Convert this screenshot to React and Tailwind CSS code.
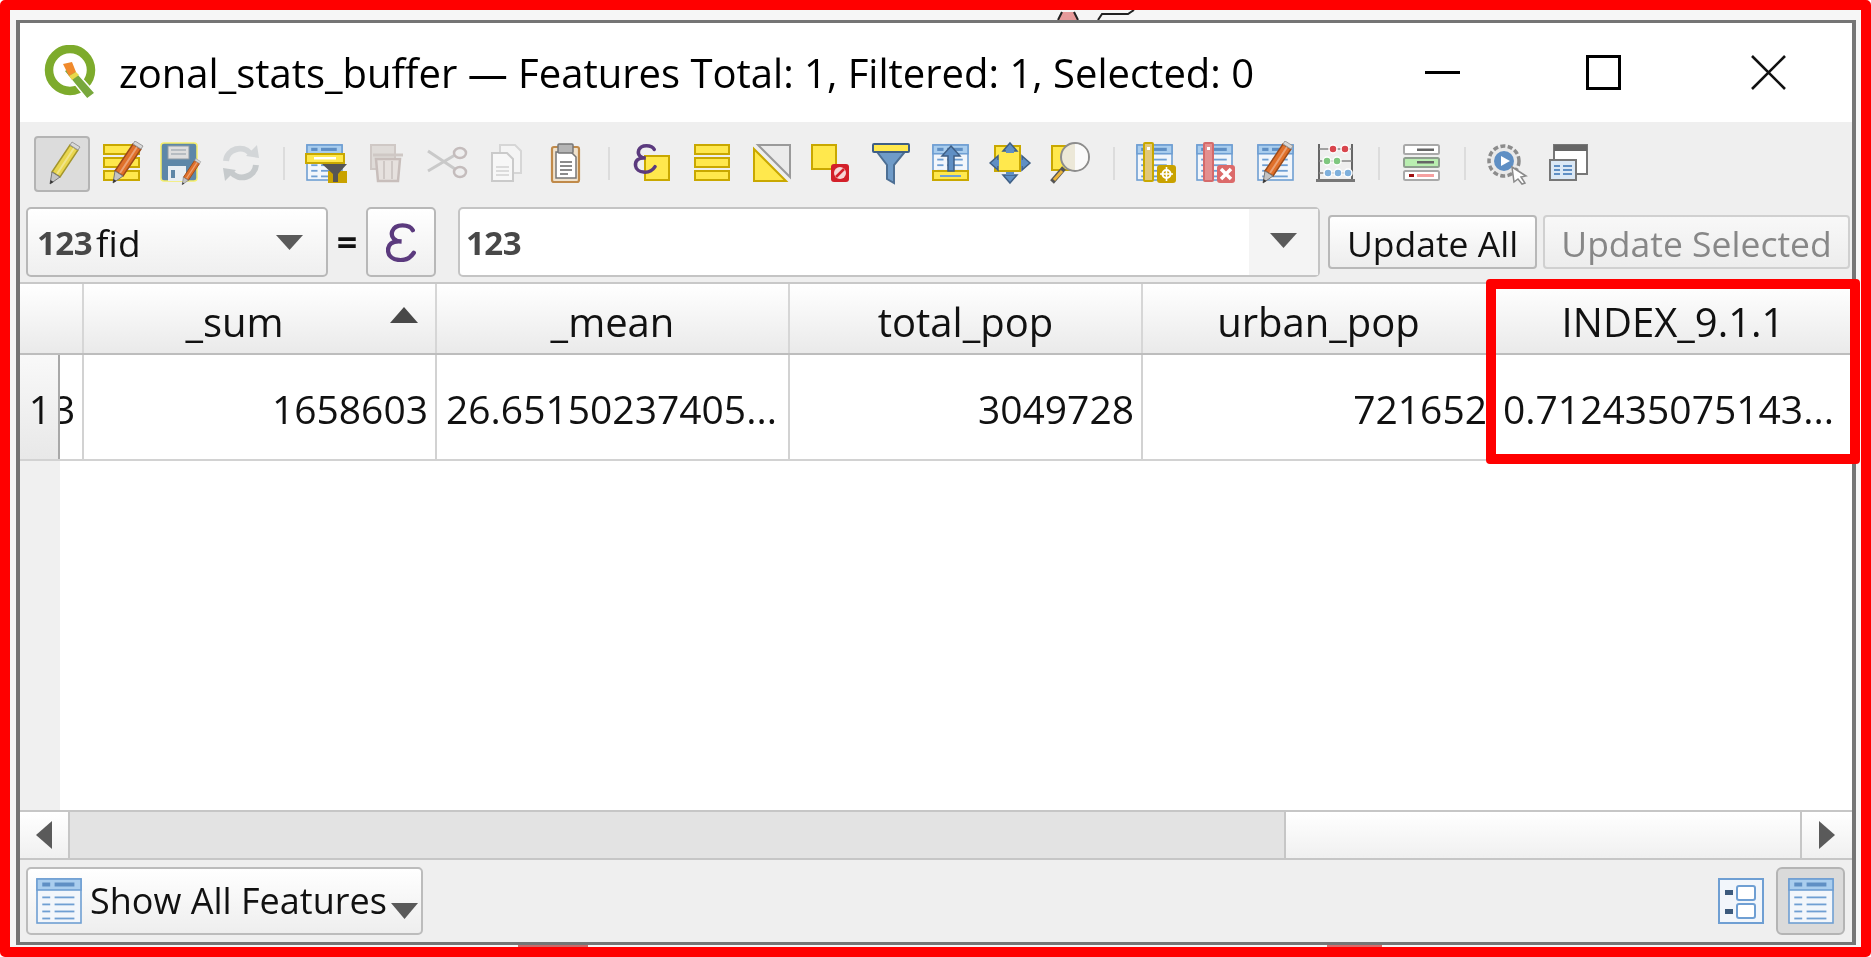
const Icon = ({ children, className = "w-11 h-11" }) => (
  <svg viewBox="0 0 44 44" className={className} fill="none">
    {children}
  </svg>
);

const Pencil = ({ body = "#e9d64f", edge = "#a4962c" }) => (
  <g>
    <path d="M12 31 L30 4 L38 9 L20 36 Z" fill={body} stroke={edge} strokeWidth="1.5" />
    <path d="M17 33 L34 7" stroke="#fff" strokeOpacity="0.35" strokeWidth="2" />
    <path d="M30 4 L32 1 L40 6 L38 9 Z" fill="#d8d8d8" stroke="#999" />
    <path d="M12 31 L20 36 L10 43 Z" fill="#c4c4c4" stroke="#777" />
    <path d="M10.5 39 L10 43 L13.5 41 Z" fill="#333" />
  </g>
);

const Epsilon = ({ color = "#5b3a7e", width = 4.2 }) => (
  <path
    d="M26 7 C23 1 9 0 6 8 C4 14 9 18 15 18 C6 17 1 21 2 28 C3 37 20 40 27 29"
    stroke={color}
    strokeWidth={width}
    strokeLinecap="round"
    fill="none"
  />
);

// blue table used by several toolbar and footer icons
const Table = ({ x = 4, y = 4, w = 35, h = 35 }) => {
  const rows = [0.42, 0.58, 0.74, 0.9];
  return (
    <g>
      <rect x={x} y={y} width={w} height={h} fill="#f2f6fb" stroke="#6f9fd3" strokeWidth="1.6" />
      <rect x={x} y={y} width={w} height={h * 0.25} fill="#a9cdee" stroke="#6f9fd3" strokeWidth="1.6" />
      <rect x={x + w * 0.12} y={y + h * 0.08} width={w * 0.18} height={h * 0.09} fill="#5f8fc4" />
      <rect x={x + w * 0.4} y={y + h * 0.08} width={w * 0.45} height={h * 0.09} fill="#5f8fc4" />
      {rows.map((r) => (
        <g key={r}>
          <rect x={x + w * 0.12} y={y + h * r - 1} width={w * 0.18} height="1.8" fill="#6f9fd3" />
          <rect x={x + w * 0.4} y={y + h * r - 1} width={w * 0.45} height="1.8" fill="#6f9fd3" />
        </g>
      ))}
    </g>
  );
};

const Yellow = (props) => <rect fill="#ffe84d" stroke="#c9a800" strokeWidth="2" {...props} />;

const PencilButton = () => (
  <Icon>
    <Pencil />
  </Icon>
);

const EditTable = () => (
  <Icon>
    <Yellow x="4" y="4" width="35" height="9" />
    <Yellow x="4" y="17" width="35" height="9" />
    <Yellow x="4" y="30" width="35" height="9" />
    <g transform="translate(3 -1)">
      <Pencil body="#e0702a" edge="#9c4a18" />
    </g>
  </Icon>
);

const Save = () => (
  <Icon>
    <rect x="2" y="2" width="36" height="38" rx="3" fill="#5d87a8" stroke="#f5ee6a" strokeWidth="1.5" />
    <rect x="9" y="5" width="21" height="13" fill="#dedede" stroke="#8f9ba5" />
    <path d="M12 9 H27 M12 13 H27" stroke="#8f9ba5" />
    <rect x="9" y="25" width="18" height="15" fill="#e8eef3" />
    <rect x="12" y="29" width="4" height="8" fill="#5d87a8" />
    <g transform="translate(17 17) scale(0.62)">
      <Pencil body="#e0702a" edge="#9c4a18" />
    </g>
  </Icon>
);

const Refresh = () => (
  <Icon>
    <path d="M7 20 C8 8 24 3 32 13" stroke="#d3d6d8" strokeWidth="6" />
    <path d="M27 15 L40 17 L38 4 Z" fill="#d3d6d8" />
    <path d="M37 24 C36 36 20 41 12 31" stroke="#c6cacc" strokeWidth="6" />
    <path d="M17 29 L4 27 L6 40 Z" fill="#c6cacc" />
  </Icon>
);

const FilterTable = () => (
  <Icon>
    <Table x={2} y={4} w={35} h={35} />
    <Yellow x="1" y="13" width="38" height="9" />
    <rect x="9" y="16" width="22" height="2.5" fill="#fff" />
    <rect x="23" y="30" width="19" height="12" fill="#c9a200" />
    <path d="M17 23 H42 L33 33 V41 H28 V33 Z" fill="#555" />
  </Icon>
);

const Trash = () => (
  <Icon>
    <rect x="6" y="4" width="24" height="24" fill="#dfdbd8" stroke="#cfc8c5" strokeWidth="2" />
    <path d="M8 14 H38" stroke="#cfc8c5" strokeWidth="3" />
    <path d="M11 18 H35 L33 40 H13 Z" fill="#e6e1de" stroke="#c8bebb" strokeWidth="2.5" />
    <path d="M19 20 V38 M27 20 V38" stroke="#cfc8c5" strokeWidth="2" />
  </Icon>
);

const Scissors = () => (
  <Icon>
    <path d="M3 10 L30 28 M3 30 L30 14" stroke="#c9c9c9" strokeWidth="3" />
    <ellipse cx="35" cy="12" rx="6" ry="5" stroke="#c4bcbc" strokeWidth="2.5" />
    <ellipse cx="35" cy="31" rx="6" ry="5" stroke="#c4bcbc" strokeWidth="2.5" />
  </Icon>
);

const Copy = () => (
  <Icon>
    <path d="M16 4 H31 L37 10 V32 H16 Z" fill="#f4f4f4" stroke="#d6d6d6" strokeWidth="2" />
    <path d="M8 12 H23 L29 18 V40 H8 Z" fill="#f7f7f7" stroke="#cacaca" strokeWidth="2" />
    <path d="M12 26 H25 M12 30 H25 M12 34 H25" stroke="#d2d2d2" strokeWidth="1.6" />
  </Icon>
);

const Paste = () => (
  <Icon>
    <rect x="8" y="6" width="27" height="35" rx="2" fill="#f0e2cc" stroke="#c08a4a" strokeWidth="2.2" />
    <path d="M12 11 H27 L32 16 V37 H12 Z" fill="#fff" stroke="#777" strokeWidth="1.5" />
    <rect x="14" y="3" width="15" height="9" rx="1" fill="#b5b5b5" stroke="#777" strokeWidth="1.5" />
    <path d="M16 21 H28 M16 25 H28 M16 29 H28 M16 33 H24" stroke="#666" strokeWidth="1.5" />
  </Icon>
);

const ExprSelect = () => (
  <Icon>
    <Yellow x="15" y="15" width="24" height="24" />
    <g transform="translate(4 3) scale(0.78)">
      <Epsilon width="4.5" />
    </g>
  </Icon>
);

const Rows = () => (
  <Icon>
    <Yellow x="5" y="4" width="34" height="9" />
    <Yellow x="5" y="17" width="34" height="9" />
    <Yellow x="5" y="30" width="34" height="9" />
  </Icon>
);

const Invert = () => (
  <Icon>
    <path d="M8 4 H40 V36 Z" fill="#ebebeb" stroke="#9a9a9a" strokeWidth="2" />
    <path d="M4 8 L36 40 H4 Z" fill="#ffe84d" stroke="#c9a800" strokeWidth="2" />
  </Icon>
);

const Deselect = () => (
  <Icon>
    <Yellow x="3" y="4" width="24" height="24" />
    <rect x="22" y="23" width="18" height="18" rx="3" fill="#d3202a" />
    <circle cx="31" cy="32" r="6" fill="#f7d6d6" />
    <path d="M27 36 L35 28" stroke="#d3202a" strokeWidth="2.5" />
  </Icon>
);

const Funnel = () => (
  <Icon>
    <path d="M5 7 L18 24 V38 L25 42 V24 L39 7 Z" fill="#6f9bc8" stroke="#4d6f94" strokeWidth="2" />
    <rect x="4" y="3" width="36" height="8" rx="1" fill="#ffe84d" stroke="#3f5f85" strokeWidth="2" />
  </Icon>
);

const MoveTop = () => (
  <Icon>
    <Table x={4} y={4} w={35} h={35} />
    <Yellow x="4" y="30" width="35" height="9" />
    <rect x="11" y="34" width="21" height="2" fill="#6f9fd3" />
    <path d="M22 5 L31 15 H25 V30 H19 V15 H13 Z" fill="#5f8fc4" stroke="#3f5f85" strokeWidth="1.5" />
  </Icon>
);

const Pan = () => (
  <Icon>
    <Yellow x="6" y="5" width="25" height="25" />
    <g fill="#5f8fc4" stroke="#3f5f85" strokeWidth="1.5">
      <path d="M21 2 L28 10 H14 Z" />
      <path d="M21 42 L28 34 H14 Z" />
      <path d="M1 22 L9 15 V29 Z" />
      <path d="M41 22 L33 15 V29 Z" />
    </g>
    <rect x="17" y="9" width="8" height="3" fill="#5f8fc4" />
    <rect x="17" y="31" width="8" height="3" fill="#5f8fc4" />
    <rect x="6" y="19" width="4" height="6" fill="#5f8fc4" />
    <rect x="32" y="19" width="4" height="6" fill="#5f8fc4" />
  </Icon>
);

const ZoomSel = () => (
  <Icon>
    <Yellow x="3" y="5" width="24" height="24" />
    <circle cx="26" cy="16" r="14" fill="#ece8d8" stroke="#8d8d8d" strokeWidth="2" />
    <path d="M26 3 A13 13 0 0 1 26 29 Z" fill="#fafafa" />
    <path d="M15 27 L3 41" stroke="#555" strokeWidth="5" />
    <path d="M13 30 L5 39" stroke="#eab33a" strokeWidth="3" />
  </Icon>
);

const NewField = () => (
  <Icon>
    <Table x={3} y={4} w={35} h={35} />
    <rect x="10" y="2" width="9" height="38" rx="1" fill="#e2c878" stroke="#c9a800" strokeWidth="2" />
    <rect x="13" y="6" width="3" height="3" fill="#fff" />
    <rect x="23" y="24" width="19" height="18" rx="3" fill="#c9a200" />
    <circle cx="32.5" cy="33" r="4" stroke="#fff" strokeWidth="2" />
    <path d="M32.5 26 V40 M26 33 H39" stroke="#fff" strokeWidth="1.6" />
  </Icon>
);

const DeleteField = () => (
  <Icon>
    <Table x={3} y={4} w={35} h={35} />
    <rect x="10" y="2" width="9" height="38" rx="1" fill="#e48f8f" stroke="#d56a6a" strokeWidth="2" />
    <rect x="13" y="6" width="3" height="3" fill="#fff" />
    <rect x="23" y="24" width="18" height="18" rx="3" fill="#dc6a6a" />
    <path d="M27 28 L37 38 M37 28 L27 38" stroke="#fff" strokeWidth="3.5" />
  </Icon>
);

const EditField = () => (
  <Icon>
    <Table x={4} y={4} w={35} h={35} />
    <g transform="translate(-1 -1)">
      <Pencil body="#e0702a" edge="#9c4a18" />
    </g>
  </Icon>
);

const Abacus = () => {
  const beads = [
    ["#d8454d", [19, 31], 8],
    ["#7fc77f", [13, 23], 20],
    ["#7fb0dc", [14, 24, 34], 32],
  ];
  return (
    <Icon>
      <path d="M5 3 V39 M38 3 V39" stroke="#666" strokeWidth="2" />
      <path d="M5 8 H38 M5 20 H38 M5 32 H38" stroke="#888" strokeWidth="1.5" />
      <rect x="2" y="38" width="39" height="3" fill="#777" />
      {beads.map(([color, xs, y]) =>
        xs.map((x) => <circle key={`${y}-${x}`} cx={x} cy={y} r="4" fill={color} stroke="#fff" strokeWidth="1.5" />)
      )}
    </Icon>
  );
};

const Conditional = () => (
  <Icon>
    <rect x="4" y="4" width="35" height="9" rx="1.5" fill="#fff" stroke="#a9a9a9" strokeWidth="2" />
    <rect x="17" y="7.5" width="17" height="2.5" fill="#666" />
    <rect x="4" y="17" width="35" height="9" rx="1.5" fill="#b9eeb0" stroke="#8f9f8f" strokeWidth="2" />
    <rect x="17" y="20" width="17" height="2.5" fill="#666" />
    <rect x="4" y="30" width="35" height="9" rx="1.5" fill="#fff" stroke="#a9a9a9" strokeWidth="2" />
    <rect x="9" y="33" width="5" height="3" fill="#a01010" />
    <rect x="17" y="33" width="17" height="3" fill="#f6a0a0" />
  </Icon>
);

const Actions = () => (
  <Icon>
    <circle cx="19" cy="20" r="15" fill="#e9e9e9" stroke="#8c8c8c" strokeWidth="3.5" strokeDasharray="5 2.4" />
    <circle cx="19" cy="20" r="10" fill="#5f8fc4" />
    <path d="M16 15 L25 20 L16 25 Z" fill="#fff" />
    <path d="M27 26 L41 35 L36 36 L40 42 L37 43 L33 38 L29 41 Z" fill="#fff" stroke="#8a8a8a" strokeWidth="1.5" />
  </Icon>
);

const Dock = () => (
  <Icon>
    <rect x="9" y="4" width="33" height="29" fill="#fff" stroke="#777" strokeWidth="2" />
    <rect x="9" y="4" width="33" height="6" fill="#666" />
    <rect x="5" y="19" width="26" height="20" fill="#dbe8f5" stroke="#777" strokeWidth="2" />
    <path d="M9 25 H15 M18 25 H27 M9 29 H15 M18 29 H27 M9 33 H15 M18 33 H27" stroke="#5f8fc4" strokeWidth="2" />
  </Icon>
);

const FormView = () => (
  <svg viewBox="0 0 46 46" className="w-[46px] h-[46px]" fill="none">
    <rect x="1" y="1" width="44" height="44" fill="#f2f6fb" stroke="#6f9fd3" strokeWidth="2" />
    <rect x="7" y="12" width="8" height="5" fill="#3c5a7d" />
    <rect x="7" y="31" width="8" height="5" fill="#3c5a7d" />
    <rect x="19" y="8" width="18" height="14" rx="2" fill="#fff" stroke="#6f9fd3" strokeWidth="2" />
    <rect x="19" y="26" width="18" height="14" rx="2" fill="#fff" stroke="#6f9fd3" strokeWidth="2" />
  </svg>
);

const TableView = () => (
  <svg viewBox="0 0 46 46" className="w-[46px] h-[46px]" fill="none">
    <Table x={1} y={1} w={44} h={44} />
  </svg>
);

const Slot = ({ children }) => (
  <div className="w-[59.8px] h-[56px] shrink-0 flex items-center justify-center">{children}</div>
);

const Sep = () => (
  <div className="w-[26px] h-[56px] shrink-0 flex items-center justify-center">
    <div className="w-[2px] h-[33px] bg-[#dcdcdc]" />
  </div>
);

const Arrow = ({ className }) => (
  <svg viewBox="0 0 10 10" preserveAspectRatio="none" className={className}>
    <path d="M0 0 H10 L5 10 Z" fill="#5a5a5a" />
  </svg>
);

const TypeBadge = () => <span className="font-bold text-[33px] leading-none text-[#484848] tracking-[-0.5px]">123</span>;

const Head = ({ children, className = "" }) => (
  <div className={`relative flex items-center justify-center pt-[6px] border-r-2 border-[#d6d6d6] ${className}`}>
    {children}
  </div>
);

const Cell = ({ children, className = "" }) => (
  <div className={`flex items-center overflow-hidden whitespace-nowrap pt-[3px] border-r-2 border-[#d2d2d2] ${className}`}>
    {children}
  </div>
);

const tools = [
  [PencilButton, EditTable, Save, Refresh],
  [FilterTable, Trash, Scissors, Copy, Paste],
  [ExprSelect, Rows, Invert, Deselect, Funnel, MoveTop, Pan, ZoomSel],
  [NewField, DeleteField, EditField, Abacus],
  [Conditional],
  [Actions, Dock],
];

export default function App() {
  return (
    <div className="relative box-border w-[1871px] h-[957px] overflow-hidden border-[10px] border-[#ff0000] rounded-[5px] bg-[#f6f6f6] pl-[6px] pt-[10px] pr-[5px] pb-[2px] font-['Open_Sans',sans-serif] text-[#111]">
      {/* bits of the map showing behind the window */}
      <svg viewBox="0 0 90 10" className="absolute left-[1040px] top-0 w-[90px] h-[10px]" fill="none">
        <path d="M8 10 L12 2 H24 L28 10 Z" fill="#e79a9a" />
        <path d="M8 10 L12 2 M28 10 L24 2 M48 10 L52 4 H78 L84 0" stroke="#222" strokeWidth="2" />
      </svg>
      <div className="absolute left-[508px] top-[935px] w-[70px] h-[2px] bg-[#c96a6a]" />
      <div className="absolute left-[1317px] top-[935px] w-[55px] h-[2px] bg-[#d96a6a]" />

      <div className="box-border h-full flex flex-col border-x-4 border-y-[3px] border-[#757575] bg-white blur-[0.5px]">
        {/* title bar */}
        <div className="h-[99px] shrink-0 flex items-center bg-white">
          <svg viewBox="0 0 54 54" className="ml-[23px] mt-[-2px] w-[54px] h-[54px]" fill="none">
            <circle cx="27" cy="25" r="21" stroke="#7dab2c" strokeWidth="8.5" />
            <path d="M21 26 L28 21 L52 48 L44 54 Z" fill="#78a83c" stroke="#fff" strokeWidth="1.5" />
            <path d="M20 19 L29 17 L33 27 L26 31 Z" fill="#f08a2c" />
            <path d="M26 31 L33 27 L36 30 L29 35 Z" fill="#e8d84a" />
          </svg>
          <span className="ml-[22px] text-[40px] leading-none whitespace-nowrap text-black">
            zonal_stats_buffer — Features Total: 1, Filtered: 1, Selected: 0
          </span>
          <div className="ml-auto flex items-center">
            <div className="w-[35px] h-[3px] bg-black mr-[126px]" />
            <div className="w-[35px] h-[35px] border-[3px] border-black mr-[130px]" />
            <svg viewBox="0 0 35 35" className="w-[35px] h-[35px] mr-[66px]">
              <path d="M1 1 L34 34 M34 1 L1 34" stroke="#111" strokeWidth="2.6" />
            </svg>
          </div>
        </div>

        {/* toolbar and field bar */}
        <div className="h-[162px] shrink-0 bg-[#efefef] border-b-2 border-[#c8c8c8]">
          <div className="relative flex items-center pl-[12px] pt-[13px]">
            <div className="absolute left-[14px] top-[14px] w-[56px] h-[56px] rounded-[4px] bg-[#dcdcdc] border-2 border-[#b4b4b4]" />
            {tools.map((group, i) => (
              <div key={i} className="relative flex items-center">
                {i > 0 && <Sep />}
                {group.map((Tool, j) => (
                  <Slot key={j}>
                    <Tool />
                  </Slot>
                ))}
              </div>
            ))}
          </div>
          <div className="h-[70px] mt-[16px] flex items-center pl-[6px]">
            <div className="box-border w-[302px] h-[70px] flex items-center pl-[9px] rounded-[5px] border-2 border-[#b8b8b8] bg-gradient-to-b from-white to-[#efefef]">
              <TypeBadge />
              <span className="ml-[4px] text-[37px] leading-none">fid</span>
              <Arrow className="ml-auto mr-[23px] w-[27px] h-[15px]" />
            </div>
            <span className="w-[38px] text-center font-bold text-[36px] leading-none">=</span>
            <div className="box-border w-[70px] h-[70px] flex items-center justify-center rounded-[5px] border-2 border-[#b8b8b8] bg-gradient-to-b from-white to-[#efefef]">
              <svg viewBox="0 0 30 38" className="w-[31px] h-[39px]">
                <Epsilon />
              </svg>
            </div>
            <div className="box-border ml-[22px] w-[862px] h-[70px] flex items-center pl-[6px] rounded-[5px] border-2 border-[#c4c4c4] bg-white">
              <TypeBadge />
              <div className="ml-auto w-[69px] h-full flex items-center justify-center bg-[#f4f4f4]">
                <Arrow className="w-[27px] h-[15px] mt-[-4px]" />
              </div>
            </div>
            <div className="box-border ml-[8px] w-[209px] h-[54px] flex items-center justify-center pt-[3px] rounded-[4px] border-2 border-[#b8b8b8] bg-gradient-to-b from-white to-[#ededed] text-[35.5px] leading-none">
              Update All
            </div>
            <div className="box-border ml-[6px] w-[307px] h-[54px] flex items-center justify-center pt-[3px] rounded-[4px] border-2 border-[#d0d0d0] bg-gradient-to-b from-[#f8f8f8] to-[#ededed] text-[35.5px] leading-none whitespace-nowrap text-[#878787]">
              Update Selected
            </div>
          </div>
        </div>

        {/* attribute table */}
        <div className="h-[71px] shrink-0 grid grid-cols-[64px_353px_353px_353px_353px_1fr] bg-gradient-to-b from-white to-[#eaeaea] border-b-2 border-[#bdbdbd] text-[40px] leading-none">
          <Head />
          <Head>
            <span className="pr-[50px]">_sum</span>
            <svg viewBox="0 0 28 16" className="absolute right-[17px] top-[23px] w-[28px] h-[16px]">
              <path d="M14 0 L28 16 H0 Z" fill="#484848" />
            </svg>
          </Head>
          <Head>_mean</Head>
          <Head>total_pop</Head>
          <Head>urban_pop</Head>
          <Head className="border-r-0">INDEX_9.1.1</Head>
        </div>
        <div className="h-[106px] shrink-0 grid grid-cols-[40px_24px_353px_353px_353px_353px_1fr] border-b-2 border-[#d2d2d2] text-[39px] leading-none">
          <div className="flex items-center justify-end pt-[3px] pr-[7px] border-r-2 border-[#a8a8a8] bg-gradient-to-b from-[#f9f9f9] to-[#e8e8e8]">
            1
          </div>
          <Cell>
            <span className="ml-[-7px]">3</span>
          </Cell>
          <Cell className="justify-end pr-[7px]">1658603</Cell>
          <Cell className="pl-[9px]">26.65150237405...</Cell>
          <Cell className="justify-end pr-[7px]">3049728</Cell>
          <Cell className="justify-end pr-[7px]">721652</Cell>
          <Cell className="pl-[7px] border-r-0">0.712435075143...</Cell>
        </div>
        <div className="flex-1 flex bg-white">
          <div className="w-[40px] bg-[#f0f0f0]" />
        </div>

        {/* horizontal scroll bar */}
        <div className="h-[50px] shrink-0 flex border-y-2 border-[#c6c6c6] bg-[#e3e3e3]">
          <div className="w-[50px] flex items-center justify-center border-r-2 border-[#c6c6c6] bg-gradient-to-b from-white to-[#f0f0f0]">
            <svg viewBox="0 0 16 28" className="w-[16px] h-[28px]">
              <path d="M16 0 V28 L0 14 Z" fill="#5a5a5a" />
            </svg>
          </div>
          <div className="w-[1214px]" />
          <div className="flex-1 border-l-2 border-[#c6c6c6] bg-gradient-to-b from-white to-[#f0f0f0]" />
          <div className="w-[52px] flex items-center justify-center border-l-2 border-[#c6c6c6] bg-gradient-to-b from-white to-[#f0f0f0]">
            <svg viewBox="0 0 16 28" className="w-[16px] h-[28px]">
              <path d="M0 0 V28 L16 14 Z" fill="#5a5a5a" />
            </svg>
          </div>
        </div>

        {/* footer */}
        <div className="h-[82px] shrink-0 flex items-center bg-[#efefef] pl-[6px] pr-[7px]">
          <div className="box-border w-[397px] h-[68px] flex items-center pl-[8px] rounded-[5px] border-2 border-[#bcbcbc] bg-gradient-to-b from-white to-[#eeeeee]">
            <TableView />
            <span className="ml-[8px] text-[36px] leading-none whitespace-nowrap">Show All Features</span>
            <Arrow className="ml-[4px] mt-[20px] w-[27px] h-[16px] shrink-0" />
          </div>
          <div className="ml-auto">
            <FormView />
          </div>
          <div className="box-border ml-[12px] w-[69px] h-[68px] flex items-center justify-center rounded-[6px] border-2 border-[#b4b4b4] bg-[#dadada]">
            <TableView />
          </div>
        </div>
      </div>

      {/* highlight round the INDEX column */}
      <div className="absolute left-[1476px] top-[269px] box-border w-[374px] h-[185px] border-[10px] border-[#ff0000] rounded-[4px]" />
    </div>
  );
}
